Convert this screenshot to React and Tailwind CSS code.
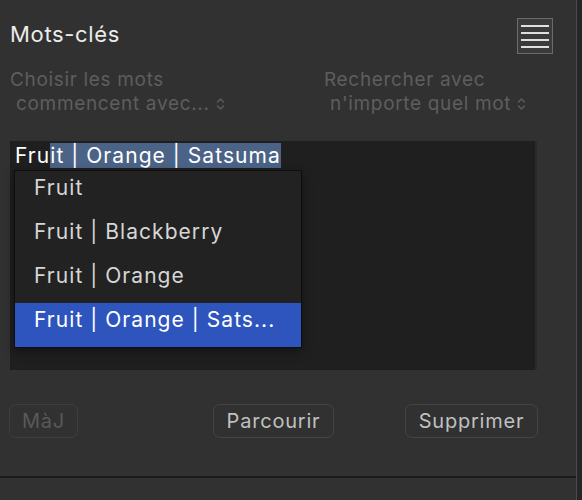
import React from 'react';

const Chevrons = () => (
  <svg width="9" height="14" viewBox="0 0 9 14" className="inline-block ml-[6px]">
    <path d="M1.5 5 L4.5 2 L7.5 5 M1.5 9 L4.5 12 L7.5 9" fill="none" stroke="currentColor" strokeWidth="1.4" strokeLinecap="round" strokeLinejoin="round" />
  </svg>
);

const Menu = () => (
  <div className="w-[36px] h-[36px] border border-[#6b6b6b] bg-[#3b3b3b] flex flex-col justify-center gap-[5px] px-[3px]">
    <div className="h-[2px] bg-[#e0e0e0]"></div>
    <div className="h-[2px] bg-[#e0e0e0]"></div>
    <div className="h-[2px] bg-[#e0e0e0]"></div>
    <div className="h-[2px] bg-[#e0e0e0]"></div>
  </div>
);

const App = () => {
  const items = ["Fruit", "Fruit | Blackberry", "Fruit | Orange", "Fruit | Orange | Sats..."];

  return (
    <div className="w-[582px] h-[500px] bg-[#313131] flex font-['Inter',sans-serif] antialiased overflow-hidden">

      <div className="w-[576px] flex flex-col">
        {/* Title */}
        <div className="flex justify-between items-start pl-[10px] pr-[23px] pt-[18px]">
          <h1 className="text-[22px] leading-[30px] tracking-[0.03em] text-[#ececec] mt-[1px]">Mots-clés</h1>
          <Menu />
        </div>

        {/* Options */}
        <div className="flex text-[19px] leading-[24px] tracking-[0.035em] text-[#5e5e5e] mt-[14px]">
          <div className="w-[324px] pl-[10px]">
            <div>Choisir les mots</div>
            <div className="pl-[6px] flex items-center">commencent avec...<Chevrons /></div>
          </div>
          <div>
            <div>Rechercher avec</div>
            <div className="pl-[6px] flex items-center">n'importe quel mot<Chevrons /></div>
          </div>
        </div>

        {/* Text area */}
        <div className="relative mx-[10px] mt-[25px] w-[527px] h-[229px] bg-[#1f1f1f] border-r-2 border-[#2a2a2a]">
          <div className="pl-[5px] pt-[1px] text-[21px] leading-[27px] tracking-[0.05em] text-white">
            Fru<span className="bg-[#4b6386]">it | Orange | Satsuma</span>
          </div>
          <div className="absolute left-[4px] top-[29px] w-[288px] bg-[#222222] border border-[#0e0e0e] shadow-[0_4px_10px_rgba(0,0,0,0.4)]">
            {items.map((it, i) => (
              <div
                key={it}
                className={`h-[44px] flex items-center pl-[19px] pb-[11px] text-[21px] tracking-[0.05em] ${i === 3 ? 'bg-[#2d55bd] text-white' : 'text-[#d6d6d6]'}`}
              >
                {it}
              </div>
            ))}
          </div>
        </div>

        {/* Buttons */}
        <div className="flex items-center mt-[34px] text-[20px] tracking-[0.04em]">
          <button className="ml-[9px] w-[69px] h-[34px] rounded-[7px] border border-[#3e3e3e] text-[#595959]">MàJ</button>
          <button className="ml-[135px] w-[121px] h-[34px] rounded-[7px] border border-[#454545] text-[#c0c0c0]">Parcourir</button>
          <button className="ml-[71px] w-[133px] h-[34px] rounded-[7px] border border-[#454545] text-[#c0c0c0]">Supprimer</button>
        </div>

        <div className="mt-auto mb-[22px] h-[2px] bg-[#1c1c1c]"></div>
      </div>

      {/* Right neighbour panel edge */}
      <div className="w-[1px] bg-[#4a4a4a]"></div>
      <div className="flex-1 bg-[#262626]"></div>
    </div>
  );
};

export default App;
